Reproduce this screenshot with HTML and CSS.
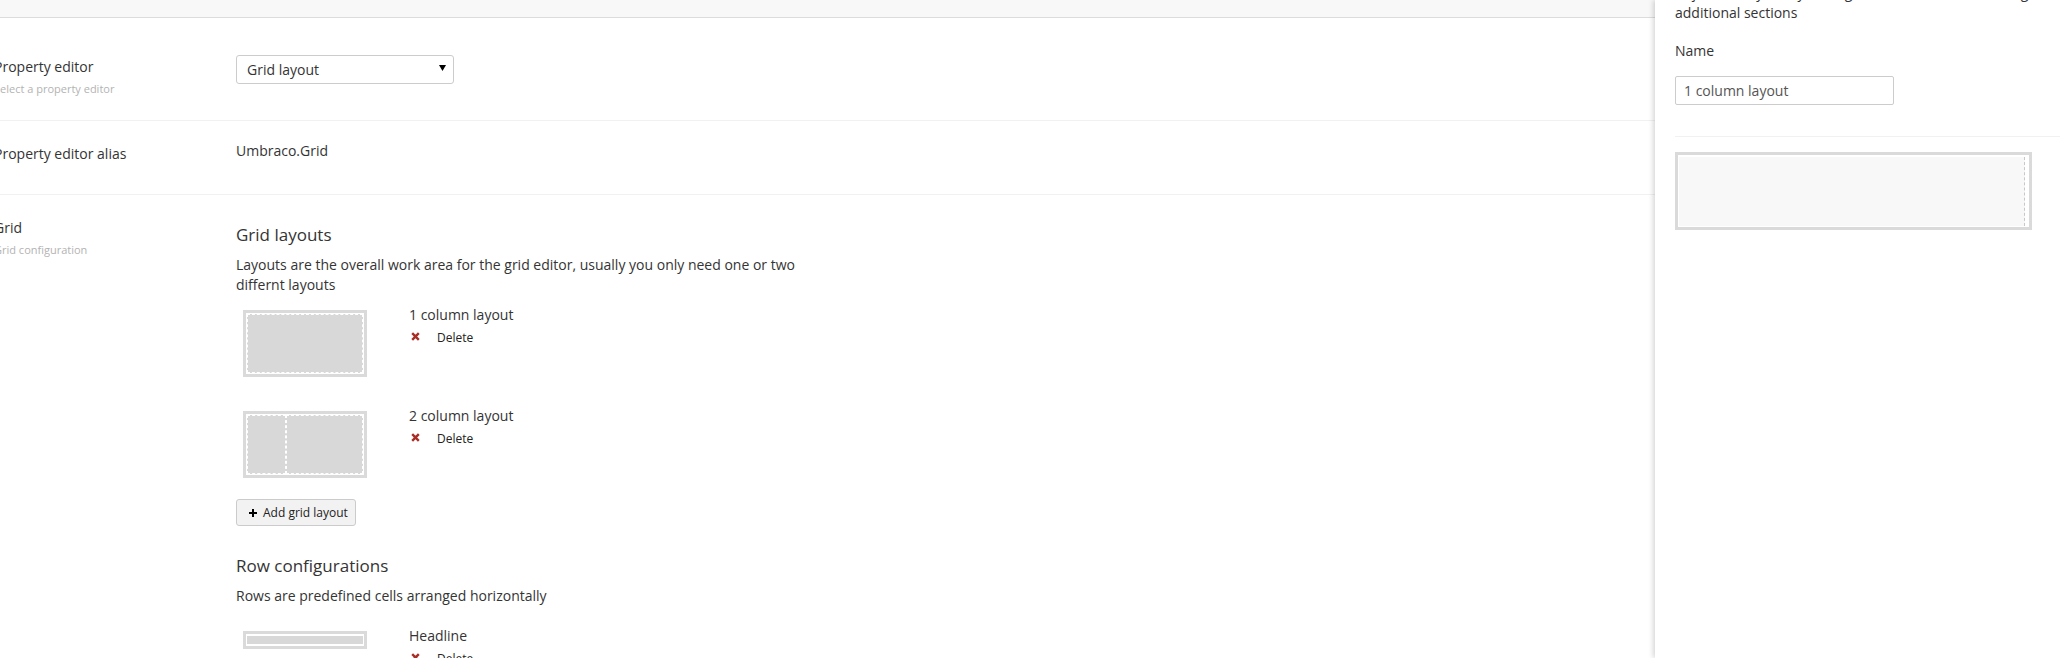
FILE: index.html
```html
<!DOCTYPE html>
<html>
<head>
    <title>Grid layout - Data type</title>
    <link rel="stylesheet" href="styles.css">
</head>
<body>
    <div class="page">
        <div class="main">
            <div class="topbar"></div>

            <div class="prop prop-editor">
                <div class="prop-label">
                    <div class="label">Property editor</div>
                    <div class="desc">Select a property editor</div>
                </div>
                <div class="prop-value">
                    <div class="select">
                        <span>Grid layout</span>
                        <svg class="caret" width="7" height="6" viewBox="0 0 7 6"><path d="M0 0H7L3.5 6Z" fill="#000"/></svg>
                    </div>
                </div>
            </div>

            <div class="prop prop-alias">
                <div class="prop-label">
                    <div class="label">Property editor alias</div>
                </div>
                <div class="prop-value">
                    <div class="value">Umbraco.Grid</div>
                </div>
            </div>

            <div class="prop prop-grid">
                <div class="prop-label">
                    <div class="label">Grid</div>
                    <div class="desc">Grid configuration</div>
                </div>
                <div class="prop-value">
                    <h4 class="section-title">Grid layouts</h4>
                    <p class="section-text">Layouts are the overall work area for the grid editor, usually you only need one or two differnt layouts</p>

                    <ul class="items layouts">
                        <li class="item">
                            <div class="thumb">
                                <div class="cell" style="flex: 12"></div>
                            </div>
                            <div class="item-info">
                                <div class="item-name">1 column layout</div>
                                <div class="delete">
                                    <svg width="9" height="9" viewBox="0 0 9 9"><path d="M1.2 1.2L7.8 7.8M7.8 1.2L1.2 7.8" stroke="#a92d27" stroke-width="2.4"/></svg>
                                    <span>Delete</span>
                                </div>
                            </div>
                        </li>
                        <li class="item">
                            <div class="thumb">
                                <div class="cell" style="flex: 4"></div>
                                <div class="cell" style="flex: 8"></div>
                            </div>
                            <div class="item-info">
                                <div class="item-name">2 column layout</div>
                                <div class="delete">
                                    <svg width="9" height="9" viewBox="0 0 9 9"><path d="M1.2 1.2L7.8 7.8M7.8 1.2L1.2 7.8" stroke="#a92d27" stroke-width="2.4"/></svg>
                                    <span>Delete</span>
                                </div>
                            </div>
                        </li>
                    </ul>

                    <button class="btn">
                        <svg width="8" height="8" viewBox="0 0 8 8"><rect x="3" y="0" width="2" height="8" fill="#000"/><rect x="0" y="3" width="8" height="2" fill="#000"/></svg>
                        <span>Add grid layout</span>
                    </button>

                    <h4 class="section-title rows-title">Row configurations</h4>
                    <p class="section-text">Rows are predefined cells arranged horizontally</p>

                    <ul class="items rows">
                        <li class="item">
                            <div class="thumb thumb-row">
                                <div class="cell-flat"></div>
                            </div>
                            <div class="item-info">
                                <div class="item-name">Headline</div>
                                <div class="delete">
                                    <svg width="9" height="9" viewBox="0 0 9 9"><path d="M1.2 1.2L7.8 7.8M7.8 1.2L1.2 7.8" stroke="#a92d27" stroke-width="2.4"/></svg>
                                    <span>Delete</span>
                                </div>
                            </div>
                        </li>
                    </ul>
                </div>
            </div>
        </div>

        <div class="panel">
            <p class="panel-text">Adjust the layout by setting column widths and adding<br>additional sections</p>
            <div class="panel-label">Name</div>
            <div class="input">1 column layout</div>
            <div class="panel-sep"></div>
            <div class="preview">
                <div class="preview-cell"></div>
            </div>
        </div>
    </div>
</body>
</html>
```

FILE: styles.css
```css
html, body { margin: 0; padding: 0; }
body { font-family: 'Open Sans', sans-serif; font-size: 14px; color: #343434; background: #fff; width: 2060px; height: 658px; overflow: hidden; }

.page { display: flex; height: 658px; }
.main { width: 1655px; flex-shrink: 0; }
.topbar { height: 17px; background: #f8f8f8; border-bottom: 1px solid #dcdcdc; }

/* property rows */
.prop { display: flex; border-bottom: 1px solid #f1f1f1; }
.prop-label { width: 242px; margin-left: -6px; flex-shrink: 0; }
.prop-value { flex: 1; }
.label { line-height: 20px; color: #343434; }
.desc { font-size: 11px; line-height: 14px; margin-top: 5px; color: #b3b3b3; }
.value { line-height: 20px; }

.prop-editor { padding: 37px 0 24px; }
.prop-editor .label { margin-top: 2px; }
.prop-alias { padding: 20px 0 30px; }
.prop-alias .label { margin-top: 3px; }
.prop-grid { padding: 23px 0 0; border-bottom: 0; }

.select { width: 218px; height: 29px; box-sizing: border-box; border: 1px solid #ccc; border-radius: 3px; display: flex; align-items: center; justify-content: space-between; padding: 0 7px 0 10px; background: #fff; }
.caret { margin-top: -3px; }

/* grid config */
.section-title { font-size: 17px; font-weight: normal; line-height: 24px; margin: 5px 0 0; color: #343434; }
.rows-title { margin-top: 28px; }
.section-text { width: 580px; line-height: 20px; margin: 8px 0 0; }

.items { list-style: none; margin: 10px 0 0; padding: 0; }
.items.rows { margin-top: 20px; }
.item { display: flex; padding-left: 7px; margin-bottom: 29px; }
.items .item:last-child { margin-bottom: 0; }

.thumb { width: 124px; height: 67px; box-sizing: border-box; margin-top: 5px; border: 3px solid #dadada; padding: 1px; display: flex; background: #fff; flex-shrink: 0; }
.cell { background: #d8d8d8; border: 1px dashed #fff; }
.thumb-row { height: 18px; padding: 2px 1px; }
.cell-flat { flex: 1; background: #d8d8d8; }

.item-info { margin-left: 42px; }
.item-name { line-height: 20px; }
.delete { display: flex; align-items: center; margin-top: 3px; height: 18px; font-size: 12px; color: #222; }
.delete svg { margin: -1px 0 0 2px; }
.delete span { margin-left: 17px; }

.btn { display: flex; align-items: center; gap: 6px; margin-top: 21px; height: 27px; width: 120px; padding: 0 0 0 12px; box-sizing: border-box; font-family: 'Open Sans', sans-serif; font-size: 12px; color: #222; background: #f2f2f2; border: 1px solid #cbcbcb; border-radius: 3px; }

/* side panel */
.panel { flex: 1; background: #fff; padding: 0 0 0 20px; box-shadow: -2px 0 5px rgba(0,0,0,0.16); position: relative; }
.panel-text { margin: -17px 0 0; line-height: 20px; white-space: nowrap; }
.panel-label { margin-top: 18px; line-height: 20px; }
.input { margin-top: 15px; width: 219px; height: 29px; box-sizing: border-box; border: 1px solid #ccc; border-radius: 2px; padding: 0 8px; line-height: 27px; color: #555; }
.panel-sep { margin-top: 31px; height: 1px; background: #f1f1f1; }
.preview { margin-top: 15px; width: 357px; height: 78px; box-sizing: border-box; border: 3px solid #dadada; padding: 1px; display: flex; background: #fff; }
.preview-cell { flex: 1; background: #f8f8f8; border-right: 1px dashed #c8c8c8; margin: 1px 3px 0 0; }
```
